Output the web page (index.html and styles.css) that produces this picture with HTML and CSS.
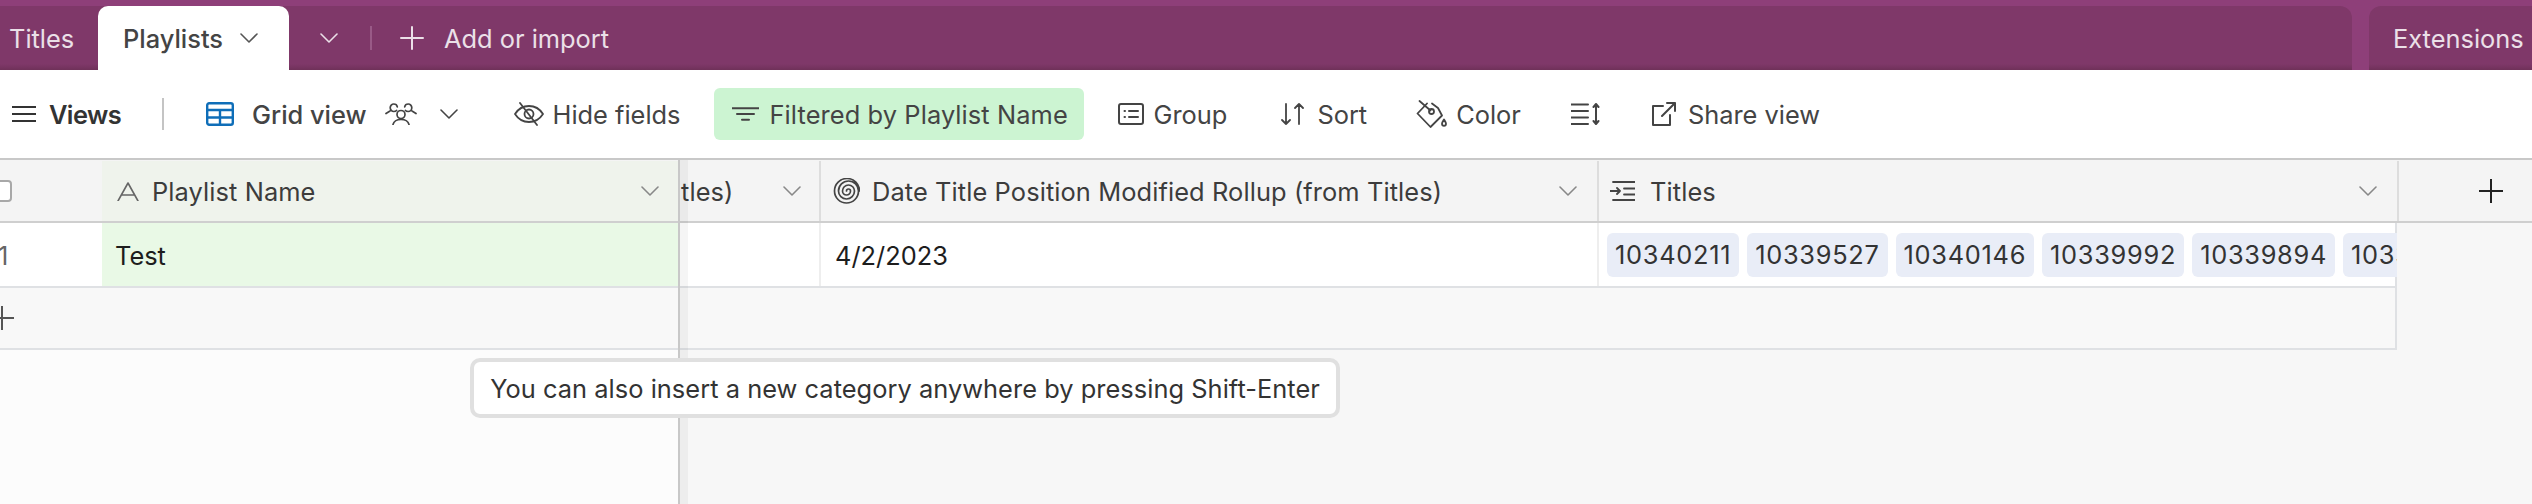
FILE: index.html
```html
<!DOCTYPE html>
<html lang="en">
<head>
<meta charset="utf-8">
<title>Playlists</title>
<link rel="stylesheet" href="styles.css">
</head>
<body>
<div class="app">
  <header class="tabbar">
    <div class="tabs">
      <span class="tab-title">Titles</span>
      <div class="tab-active">
        <span>Playlists</span>
        <svg class="chev" viewBox="0 0 18 10"><path d="M1 1l8 8 8-8"/></svg>
      </div>
      <svg class="chev chev-more" viewBox="0 0 18 10"><path d="M1 1l8 8 8-8"/></svg>
      <span class="tab-sep"></span>
      <svg class="add-plus" viewBox="0 0 24 24"><path d="M12 1v22M1 12h22"/></svg>
      <span class="add-label">Add or import</span>
    </div>
    <div class="ext"><span>Extensions</span></div>
  </header>

  <nav class="toolbar">
    <div class="tool views">
      <svg class="ico i-menu" viewBox="0 0 24 18"><path d="M0 2h24M0 9h24M0 16h24"/></svg>
      <span>Views</span>
    </div>
    <span class="tool-sep"></span>
    <svg class="ico i-grid" viewBox="0 0 28 24"><rect x="1.2" y="1.2" width="25.6" height="21.6" rx="2"/><path d="M1 8h26M1 15.500h26M14 8v14"/></svg>
    <span class="gridview">Grid view</span>
    <svg class="ico i-people" viewBox="0 0 32 22"><circle cx="16" cy="11.500" r="4"/><path d="M8 21.500c.8-3.200 3.800-5 8-5s7.200 1.800 8 5M11.500 7.500C10.800 8.300 9.800 8.500 8.800 8.500 6.800 8.500 5.200 6.800 5.200 4.800S6.800 1 8.800 1c1.700 0 3.200 1.200 3.500 2.800M20.500 7.500c.7.800 1.700 1 2.700 1 2 0 3.600-1.700 3.600-3.700S25.200 1 23.200 1c-1.700 0-3.200 1.200-3.500 2.800M1 10.500l4-2.500M31 10.500l-4-2.500"/></svg>
    <svg class="chev i-viewchev" viewBox="0 0 18 10"><path d="M1 1l8 8 8-8"/></svg>
    <div class="tool hide">
      <svg class="ico i-eye" viewBox="0 0 30 24"><path d="M1 12c3.500-5.500 8-8 14-8s10.500 2.500 14 8c-3.500 5.500-8 8-14 8S4.500 17.500 1 12z"/><circle cx="15" cy="12" r="4.500"/><path d="M6 1l17 22"/></svg>
      <span>Hide fields</span>
    </div>
    <div class="tool filter">
      <svg class="ico i-filter" viewBox="0 0 27 14"><path d="M0 1.200h27M5 7h17M10 12.800h7"/></svg>
      <span>Filtered by Playlist Name</span>
    </div>
    <div class="tool group">
      <svg class="ico i-group" viewBox="0 0 26 22"><rect x="1" y="1" width="24" height="20" rx="2"/><path d="M11 8h9M11 14h9M6.500 8h.5M6.500 14h.5"/></svg>
      <span>Group</span>
    </div>
    <div class="tool sort">
      <svg class="ico i-sort" viewBox="0 0 23 22"><path d="M5 1v20M1 17l4 4 4-4M18 21V1M14 5l4-4 4 4"/></svg>
      <span>Sort</span>
    </div>
    <div class="tool color">
      <svg class="ico i-color" viewBox="0 0 31 28"><path d="M11 3.500L1.500 13.500 14.500 27 26 15.500l-4-7.500-6-4.500"/><circle cx="15.500" cy="11.500" r="2.500"/><path d="M3.500 1l11 9.500"/><path d="M28 19.500c1.300 2 2 3 2 4.300a2 2 0 0 1-4 0c0-1.300.7-2.300 2-4.300z"/></svg>
      <span>Color</span>
    </div>
    <svg class="ico i-height" viewBox="0 0 29 22"><path d="M0 1.500h17M0 8h17M0 14.500h17M0 21h17M25 2v18M22.500 4L25 1l2.500 3M22.500 18L25 21l2.500-3"/></svg>
    <div class="tool share">
      <svg class="ico i-share" viewBox="0 0 24 24"><path d="M11 4H1v19h17V13M10 14L23 1M15 1h8v8"/></svg>
      <span>Share view</span>
    </div>
  </nav>

  <main class="grid">
    <section class="frozen">
      <div class="row head">
        <div class="c-select"><span class="checkbox"></span></div>
        <div class="c-primary">
          <svg class="ico i-text" viewBox="0 0 22 19"><path d="M1 19L11 1l10 18M5 13h12"/></svg>
          <span class="fname">Playlist Name</span>
          <svg class="chev hchev" viewBox="0 0 18 10"><path d="M1 1l8 8 8-8"/></svg>
        </div>
      </div>
      <div class="row data">
        <div class="c-select num"><span class="num-text">1</span></div>
        <div class="c-primary green">Test</div>
      </div>
      <div class="row addrow">
        <svg class="ico i-addrow" viewBox="0 0 24 24"><path d="M12 0v24M0 12h24"/></svg>
      </div>
    </section>

    <section class="scroll">
      <div class="row head">
        <div class="cell c-a">
          <span class="fname">tles)</span>
          <svg class="chev hchev" viewBox="0 0 18 10"><path d="M1 1l8 8 8-8"/></svg>
        </div>
        <div class="cell c-b">
          <svg class="ico i-rollup" viewBox="0 0 27 26"><path d="M13.500 13a2 2 0 0 1 4 0a4 4 0 0 1-8 0a6 6 0 0 1 12 0a8 8 0 0 1-16 0a10 10 0 0 1 20 0a12 12 0 0 1-24 0a12.500 12.500 0 0 1 25 0"/></svg>
          <span class="fname">Date Title Position Modified Rollup (from Titles)</span>
          <svg class="chev hchev" viewBox="0 0 18 10"><path d="M1 1l8 8 8-8"/></svg>
        </div>
        <div class="cell c-c">
          <svg class="ico i-lookup" viewBox="0 0 25 20"><path d="M3 1h22M14 7.500h11M0 10h10M7 7l3 3-3 3M14 13.500h11M3 19h22"/></svg>
          <span class="fname">Titles</span>
          <svg class="chev hchev" viewBox="0 0 18 10"><path d="M1 1l8 8 8-8"/></svg>
        </div>
        <div class="add-col">
          <svg class="ico i-addcol" viewBox="0 0 24 24"><path d="M12 0v24M0 12h24"/></svg>
        </div>
      </div>
      <div class="row data">
        <div class="cell c-a"></div>
        <div class="cell c-b val">4/2/2023</div>
        <div class="cell c-c chips">
          <span class="chip">10340211</span>
          <span class="chip">10339527</span>
          <span class="chip">10340146</span>
          <span class="chip">10339992</span>
          <span class="chip">10339894</span>
          <span class="chip">10339</span>
        </div>
      </div>
      <div class="row addrow"></div>
    </section>

    <div class="tooltip">You can also insert a new category anywhere by pressing Shift-Enter</div>
  </main>
</div>
</body>
</html>
```
FILE: styles.css
```css
* { box-sizing: border-box; }
html, body { margin: 0; height: 100%; overflow: hidden; }
body { font-family: Inter, "Liberation Sans", sans-serif; font-size: 25.4px; color: #333; background: #f7f7f7; }
.app { display: flex; flex-direction: column; height: 504px; width: 2532px; }

svg { display: block; flex: none; fill: none; stroke-linecap: round; stroke-linejoin: round; }
.chev { width: 18px; height: 10px; stroke: currentColor; stroke-width: 1.6; }
.ico { stroke: #444; stroke-width: 2; }

/* tab bar */
.tabbar { height: 70px; flex: none; background: #8e3f79; padding-top: 6px; display: flex; gap: 17px; }
.tabs, .ext { height: 64px; background: linear-gradient(#7f3869, #7f3869 58px, #6f3159); display: flex; align-items: center; color: #ebe0e8; }
.tabs { width: 2352px; border-top-right-radius: 12px; }
.ext { flex: 1; border-top-left-radius: 12px; padding-left: 24px; }
.tab-title { margin-left: 9px; width: 89px; }
.tab-active { width: 191px; height: 64px; background: #fff; color: #444; border-radius: 10px 10px 0 0; display: flex; align-items: center; padding-left: 25px; font-weight: 500; }
.tab-active .chev { margin-left: 17px; stroke: #555; }
.chev-more { margin-left: 31px; stroke: #ebe0e8; }
.tab-sep { width: 2px; height: 24px; background: #995a87; margin-left: 32px; }
.add-plus { width: 24px; height: 24px; margin-left: 28px; stroke: #ebe0e8; stroke-width: 2; }
.add-label { margin-left: 20px; }

/* toolbar */
.toolbar { height: 90px; flex: none; background: #fff; border-bottom: 2px solid #c8c8c8; display: flex; align-items: center; padding-left: 12px; color: #444; }
.tool { display: flex; align-items: center; }
.views { font-weight: 600; color: #333; letter-spacing: -.6px; }
.i-menu { width: 24px; height: 18px; margin-right: 13px; stroke: #333; }
.tool-sep { width: 2px; height: 32px; background: #c4c4c4; margin-left: 41px; }
.i-grid { width: 28px; height: 24px; margin-left: 42px; stroke: #0f6eb8; stroke-width: 2.4; }
.gridview { margin-left: 18px; font-weight: 500; }
.i-people { width: 32px; height: 22px; margin-left: 18px; stroke-width: 1.7; }
.i-viewchev { margin-left: 23px; stroke: #444; }
.hide { margin-left: 56px; }
.i-eye { width: 30px; height: 24px; margin-right: 9px; stroke-width: 1.8; }
.filter { margin-left: 33px; height: 52px; width: 370px; padding-left: 18px; background: #ccf4d2; border-radius: 6px; letter-spacing: .1px; }
.i-filter { width: 27px; height: 14px; margin-right: 11px; }
.group { margin-left: 34px; }
.i-group { width: 26px; height: 22px; margin-right: 10px; }
.sort { margin-left: 54px; }
.i-sort { width: 23px; height: 22px; margin-right: 13px; stroke-width: 1.8; }
.color { margin-left: 49px; }
.i-color { width: 31px; height: 28px; margin-right: 9px; stroke-width: 1.8; }
.i-height { width: 29px; height: 22px; margin-left: 50px; }
.share { margin-left: 52px; }
.i-share { width: 24px; height: 24px; margin-right: 12px; }

/* grid */
.grid { position: relative; flex: 1; display: flex; overflow: hidden; }
.frozen { width: 680px; flex: none; background: #fcfcfc; border-right: 2px solid #c8c8c8; position: relative; z-index: 1; box-shadow: 8px 0 0 rgba(0, 0, 0, .04); }
.scroll { flex: 1; min-width: 0; }
.row { display: flex; }
.head { height: 63px; background: #f4f4f4; border-bottom: 2px solid #cfcfcf; padding-top: 1px; }
.data { height: 65px; background: #fff; border-bottom: 2px solid #dfe1e4; color: #1d1d1d; }
.addrow { height: 62px; background: #f8f8f8; border-bottom: 2px solid #dfe1e4; align-items: center; }
.scroll .data, .scroll .addrow { width: 1717px; border-right: 2px solid #dfe1e4; }

.c-select { width: 102px; flex: none; display: flex; align-items: center; }
.checkbox { width: 22px; height: 22px; margin-left: -10px; border: 2px solid #a8a8a8; border-radius: 4px; background: #fff; }
.num { color: #666; padding-top: 2px; }
.num-text { margin-left: -2px; }
.c-primary { flex: 1; display: flex; align-items: center; background: #eff3ec; padding-left: 15px; }
.c-primary .hchev { margin-left: auto; margin-right: 19px; }
.c-primary.green { background: #e9f9e6; padding-left: 13px; color: #1d1d1d; padding-top: 2px; }
.i-text { width: 22px; height: 19px; margin-right: 13px; stroke: #666; stroke-width: 1.6; }
.fname { color: #3c3c3c; letter-spacing: .1px; }
.hchev { stroke: #888; }
.i-addrow { width: 24px; height: 24px; margin-left: -10px; stroke: #555; }

.cell { flex: none; display: flex; align-items: center; overflow: hidden; }
.data .cell + .cell { border-left: 2px solid #eee; }
.head .cell + .cell { border-left: 2px solid #ddd; }
.c-a { width: 139px; padding-left: 1px; }
.c-a .hchev { margin-left: 50px; }
.c-b { width: 778px; padding-left: 12px; }
.c-b .hchev { margin-left: auto; margin-right: 20px; }
.i-rollup { width: 27px; height: 26px; margin-right: 12px; stroke-width: 1.7; }
.val { padding-left: 14px; padding-top: 2px; }
.c-c { width: 800px; padding-left: 11px; }
.c-c .hchev { margin-left: auto; margin-right: 20px; }
.i-lookup { width: 25px; height: 20px; margin-right: 15px; stroke-width: 1.8; }
.add-col { flex: 1; display: flex; align-items: center; justify-content: center; border-left: 2px solid #ddd; padding-left: 50px; }
.i-addcol { width: 24px; height: 24px; stroke: #222; }
.chips { gap: 8px; padding-left: 8px; }
.chip { flex: none; height: 44px; padding: 0 8px; display: flex; align-items: center; border-radius: 6px; background: #e9edf7; color: #333; letter-spacing: .7px; }

.tooltip { position: absolute; z-index: 2; left: 470px; top: 198px; width: 870px; height: 60px; display: flex; align-items: center; justify-content: center; background: #fff; border: 4px solid #e0e0e0; border-radius: 10px; color: #333; letter-spacing: .04px; }
```
